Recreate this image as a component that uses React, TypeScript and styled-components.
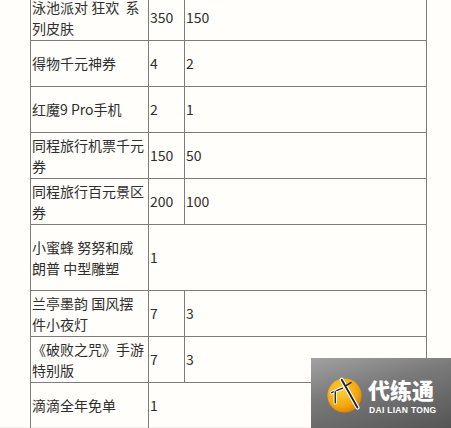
import React from "react";
import styled, { createGlobalStyle } from "styled-components";

const Global = createGlobalStyle`
  html, body { margin: 0; padding: 0; background: #fffefa; }
  body { width: 451px; height: 428px; overflow: hidden; position: relative; }
`;

const Page = styled.div`
  position: relative;
  width: 451px;
  height: 428px;
  overflow: hidden;
  padding-left: 30px;
  box-sizing: border-box;
  background: linear-gradient(180deg, #fffefa 0, #fffefa 427px, #f3f2ee 427px);
`;

const Table = styled.table`
  margin-top: -6px;
  border-collapse: collapse;
  table-layout: fixed;
  width: 396px;
  font-family: "Noto Sans CJK SC", "Noto Sans", sans-serif;
  font-size: 14px;
  line-height: 21px;
  color: #2e2e2e;
`;

const Col = styled.col<{ $w: number }>`
  width: ${(p) => p.$w}px;
`;

const Row = styled.tr<{ $h: number }>`
  height: ${(p) => p.$h}px;
`;

const Cell = styled.td`
  border: 1px solid #7d7d7d;
  padding: 0 0 0 1px;
  vertical-align: middle;
  word-break: break-all;
`;

const Badge = styled.div`
  position: absolute;
  left: 311px;
  top: 358px;
  width: 140px;
  height: 70px;
  background: linear-gradient(165deg, #a2a2a2 0%, #7a7a7a 40%, #555 100%);
  display: flex;
  align-items: center;
  padding-left: 15px;
  box-sizing: border-box;
  gap: 5px;
  overflow: hidden;
`;

const Mark = styled.svg`
  width: 37px;
  height: 37px;
  flex: none;
  margin-top: 4px;
`;

const BrandText = styled.div`
  display: flex;
  flex-direction: column;
  align-items: flex-start;
  color: #fff;
  margin-top: 2px;
`;

const BrandName = styled.div`
  font-family: "Noto Sans CJK SC", sans-serif;
  font-weight: 900;
  font-size: 22px;
  line-height: normal;
`;

const BrandSub = styled.div`
  font-family: "Liberation Sans", Arial, sans-serif;
  font-weight: 700;
  font-size: 8.5px;
  line-height: 10px;
  letter-spacing: 0.3px;
  margin-left: 1px;
`;

type R = { name: React.ReactNode; a: string; b?: string; h: number };

const rows: R[] = [
  { name: <>泳池派对 狂欢&nbsp; 系<br />列皮肤</>, a: "350", b: "150", h: 46 },
  { name: "得物千元神券", a: "4", b: "2", h: 46 },
  { name: "红魔9 Pro手机", a: "2", b: "1", h: 46 },
  { name: <>同程旅行机票千元<br />券</>, a: "150", b: "50", h: 46 },
  { name: <>同程旅行百元景区<br />券</>, a: "200", b: "100", h: 46 },
  { name: <>小蜜蜂 努努和威<br />朗普 中型雕塑</>, a: "1", h: 66 },
  { name: <>兰亭墨韵 国风摆<br />件小夜灯</>, a: "7", b: "3", h: 46 },
  { name: <>《破败之咒》手游<br />特别版</>, a: "7", b: "3", h: 46 },
  { name: "滴滴全年免单", a: "1", h: 46 },
];

export default function App() {
  return (
    <>
      <Global />
      <Page>
        <Table>
          <colgroup>
            <Col $w={118} />
            <Col $w={36} />
            <Col $w={242} />
          </colgroup>
          <tbody>
            {rows.map((r, i) => (
              <Row key={i} $h={r.h}>
                <Cell>{r.name}</Cell>
                {r.b === undefined ? (
                  <Cell colSpan={2}>{r.a}</Cell>
                ) : (
                  <>
                    <Cell>{r.a}</Cell>
                    <Cell>{r.b}</Cell>
                  </>
                )}
              </Row>
            ))}
          </tbody>
        </Table>
        <Badge>
          <Mark viewBox="0 0 40 40">
            <defs>
              <radialGradient id="og" cx="0.4" cy="0.35" r="0.7">
                <stop offset="0" stopColor="#ffd23a" />
                <stop offset="0.7" stopColor="#f4a40c" />
                <stop offset="1" stopColor="#d97e00" />
              </radialGradient>
            </defs>
            <circle cx="20" cy="20" r="18.5" fill="url(#og)" />
            <path d="M17 3 L34 33" stroke="#fff" strokeWidth="4.5" strokeLinecap="round" />
            <path d="M17 3 L34 33" stroke="#222" strokeWidth="2" strokeLinecap="round" />
            <path d="M6 17 L18 12" stroke="#fff" strokeWidth="3.5" strokeLinecap="round" />
            <path d="M6 17 L18 12" stroke="#222" strokeWidth="1.5" strokeLinecap="round" />
            <path d="M10 16 L10 28" stroke="#fff" strokeWidth="3.5" strokeLinecap="round" />
            <path d="M10 16 L10 28" stroke="#222" strokeWidth="1.5" strokeLinecap="round" />
            <path d="M22 9 L27 6" stroke="#222" strokeWidth="1.5" strokeLinecap="round" />
          </Mark>
          <BrandText>
            <BrandName>代练通</BrandName>
            <BrandSub>DAI LIAN TONG</BrandSub>
          </BrandText>
        </Badge>
      </Page>
    </>
  );
}
